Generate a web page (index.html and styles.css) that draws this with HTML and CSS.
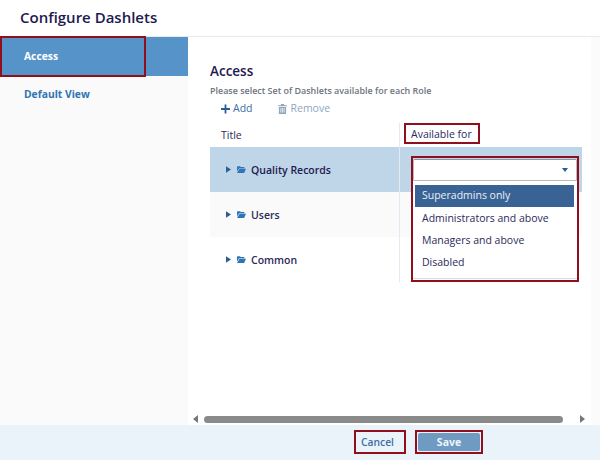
FILE: index.html
```html
<!DOCTYPE html>
<html lang="en">
<head>
<meta charset="utf-8">
<title>Configure Dashlets</title>
<link rel="stylesheet" href="styles.css">
</head>
<body>
<div class="dialog">
  <header class="dialog-header">Configure Dashlets</header>
  <div class="dialog-body">
    <nav class="sidebar">
      <a class="nav-item nav-active">Access<span class="mark mark-nav"></span></a>
      <a class="nav-item">Default View</a>
    </nav>
    <main class="main">
      <div class="content">
        <h2 class="heading">Access</h2>
        <p class="hint">Please select Set of Dashlets available for each Role</p>
        <div class="toolbar">
          <span class="tool tool-add">
            <svg class="tool-icon" viewBox="0 0 10 10"><path d="M4 0h2v4h4v2H6v4H4V6H0V4h4z"/></svg>Add
          </span>
          <span class="tool tool-remove">
            <svg class="tool-icon" viewBox="0 0 10 11"><path d="M3.5 0h3l.6 1.2H10v1.2H0V1.200h2.900zM1 3.200h8V11H1zM2.800 4.500v5h.8v-5zM4.600 4.500v5h.8v-5zM6.400 4.500v5h.8v-5z" fill-rule="evenodd"/></svg>Remove
          </span>
        </div>
        <div class="grid">
          <div class="grid-head">
            <div class="col-title">Title</div>
            <div class="col-avail"><span class="avail-label">Available for</span></div>
          </div>
          <div class="row row-selected">
            <div class="cell-title">
              <svg class="caret" viewBox="0 0 6 8"><path d="M0 0l6 4-6 4z"/></svg>
              <svg class="folder" viewBox="0 0 12 9"><path d="M0 1a1 1 0 0 1 1-1h3l1 1h4a1 1 0 0 1 1 1v.8H3L0 7zM3.400 3.600H12L9.500 9H0z"/></svg>
              <span class="name name-strong">Quality Records</span>
            </div>
            <div class="cell-avail"></div>
          </div>
          <div class="row row-alt">
            <div class="cell-title">
              <svg class="caret" viewBox="0 0 6 8"><path d="M0 0l6 4-6 4z"/></svg>
              <svg class="folder" viewBox="0 0 12 9"><path d="M0 1a1 1 0 0 1 1-1h3l1 1h4a1 1 0 0 1 1 1v.8H3L0 7zM3.400 3.600H12L9.500 9H0z"/></svg>
              <span class="name">Users</span>
            </div>
            <div class="cell-avail"></div>
          </div>
          <div class="row">
            <div class="cell-title">
              <svg class="caret" viewBox="0 0 6 8"><path d="M0 0l6 4-6 4z"/></svg>
              <svg class="folder" viewBox="0 0 12 9"><path d="M0 1a1 1 0 0 1 1-1h3l1 1h4a1 1 0 0 1 1 1v.8H3L0 7zM3.400 3.600H12L9.500 9H0z"/></svg>
              <span class="name">Common</span>
            </div>
            <div class="cell-avail"></div>
          </div>
          <div class="picker">
            <div class="select"><span class="select-arrow"></span></div>
            <ul class="options">
              <li class="option option-active">Superadmins only</li>
              <li class="option">Administrators and above</li>
              <li class="option">Managers and above</li>
              <li class="option">Disabled</li>
            </ul>
          </div>
        </div>
      </div>
      <div class="scrollbar">
        <span class="arrow arrow-left"></span>
        <span class="track"></span>
        <span class="arrow arrow-right"></span>
      </div>
    </main>
    <div class="gutter"></div>
  </div>
  <footer class="dialog-footer">
    <button class="btn btn-cancel">Cancel</button>
    <button class="btn-save-frame"><span class="btn-save">Save</span></button>
  </footer>
</div>
</body>
</html>
```
FILE: styles.css
```css
* { box-sizing: border-box; }
html, body { margin: 0; padding: 0; }
body {
  width: 600px;
  height: 460px;
  overflow: hidden;
  background: #fff;
  font-family: "Open Sans", "Noto Sans", sans-serif;
  color: #1f1a55;
}
.dialog { display: flex; flex-direction: column; height: 460px; }
.dialog-header {
  height: 37px;
  padding: 0 20px 3px;
  display: flex;
  align-items: center;
  font-size: 15px;
  font-weight: 600;
  color: #1e1a50;
  border-bottom: 1px solid #e6ebf3;
}
.dialog-body { flex: 1; display: flex; min-height: 0; }
.sidebar { width: 188px; background: #fafafa; flex: none; }
.gutter { width: 9px; background: #fbfbfb; flex: none; }
.nav-item {
  position: relative;
  display: flex;
  align-items: center;
  height: 35px;
  padding-left: 24px;
  font-size: 10.300px;
  font-weight: 700;
  color: #2f74b5;
}
.nav-active {
  height: 39px;
  padding-bottom: 2px;
  background: #5593c9;
  color: #fff;
}
.mark-nav {
  position: absolute;
  left: 0;
  top: -1px;
  width: 146px;
  height: 41px;
  border: 2px solid #8f0f1c;
}
.main { flex: 1; display: flex; flex-direction: column; min-width: 0; }
.content { flex: 1; padding: 26px 9px 0 22px; }
.heading {
  margin: 0;
  font-size: 13.500px;
  line-height: 17px;
  font-weight: 600;
  color: #1e1a50;
}
.hint {
  margin: 4px 0 0;
  font-size: 8.950px;
  line-height: 13px;
  font-weight: 600;
  color: #6d7480;
}
.toolbar {
  display: flex;
  gap: 25px;
  padding: 4px 0 0 11px;
  font-size: 10.500px;
  line-height: 15px;
}
.tool { display: flex; align-items: center; gap: 3px; }
.tool-icon { width: 9px; height: 10px; }
.tool-add { color: #3a6ea5; }
.tool-add .tool-icon { fill: #2c5c94; }
.tool-remove { color: #8ea7bf; gap: 4px; }
.tool-remove .tool-icon { fill: #8ea7bf; }
.grid { position: relative; margin-top: 7px; }
.grid-head { display: flex; height: 24px; font-size: 10.500px; color: #2c2a5a; }
.col-title { width: 189px; padding: 5px 0 0 11px; line-height: 15px; }
.col-avail { flex: 1; border-left: 1px solid #e3eaf2; padding-left: 4px; }
.avail-label {
  display: inline-block;
  height: 21px;
  padding: 0 6px 0 5px;
  line-height: 18px;
  border: 2px solid #8f0f1c;
}
.row { display: flex; height: 45px; }
.row-selected { background: #bfd5e8; }
.row-alt { background: #fafafa; }
.cell-title {
  width: 189px;
  display: flex;
  align-items: center;
  padding-left: 16px;
  font-size: 10.500px;
}
.cell-avail { flex: 1; border-left: 1px solid #e3eaf2; }
.caret { width: 5px; height: 7px; fill: #2c5c94; margin-right: 6px; }
.folder { width: 9px; height: 7px; fill: #2f74b5; margin-right: 5px; }
.name { font-weight: 600; color: #2c2a5a; }
.name-strong { color: #1e1a50; }
.picker {
  position: absolute;
  left: 201px;
  top: 33px;
  width: 168px;
  height: 126px;
  border: 2px solid #8f0f1c;
  padding: 1px 0 0;
}
.select {
  position: relative;
  height: 22px;
  background: #fff;
  border: 1px solid #b8bcc2;
  border-top-color: #8d97a3;
  border-radius: 2px;
}
.select-arrow {
  position: absolute;
  right: 8px;
  top: 8px;
  width: 0;
  height: 0;
  border-left: 3px solid transparent;
  border-right: 3px solid transparent;
  border-top: 4px solid #2c5c94;
}
.options {
  list-style: none;
  margin: 0;
  padding: 4px 3px 0 2px;
  height: 98px;
  background: #fff;
  border-bottom: 1px solid #d8dde3;
  font-size: 10.500px;
}
.option { height: 22px; padding-left: 7px; line-height: 23px; color: #2c2a5a; }
.option-active { background: #396394; color: #eaf0f7; line-height: 21px; }
.scrollbar { display: flex; align-items: center; height: 10px; margin-bottom: 1px; padding: 0 6px 0 5px; gap: 6px; flex: none; }
.arrow { width: 0; height: 0; border-top: 4px solid transparent; border-bottom: 4px solid transparent; flex: none; }
.arrow-left { border-right: 5px solid #777; }
.arrow-right { border-left: 5px solid #777; margin-left: 11px; }
.track { flex: 1; height: 7px; border-radius: 4px; background: #8a8a8a; }
.dialog-footer {
  height: 35px;
  flex: none;
  background: #ebf3fa;
  display: flex;
  align-items: center;
  padding: 0 0 1px 354px;
  gap: 9px;
}
.btn, .btn-save-frame { font-family: inherit; cursor: pointer; }
.btn-cancel {
  width: 52px;
  height: 24px;
  padding: 0 5px 0 0;
  background: transparent;
  border: 2px solid #8f0f1c;
  color: #3f6ea6;
  font-size: 10.300px;
  font-weight: 600;
}
.btn-save-frame {
  width: 68px;
  height: 24px;
  padding: 1px;
  background: transparent;
  border: 2px solid #8f0f1c;
  display: flex;
}
.btn-save {
  flex: 1;
  background: #6f9bc2;
  border-radius: 2px;
  color: #eef4fa;
  font-size: 10.500px;
  font-weight: 700;
  line-height: 18px;
  text-align: center;
}
```
